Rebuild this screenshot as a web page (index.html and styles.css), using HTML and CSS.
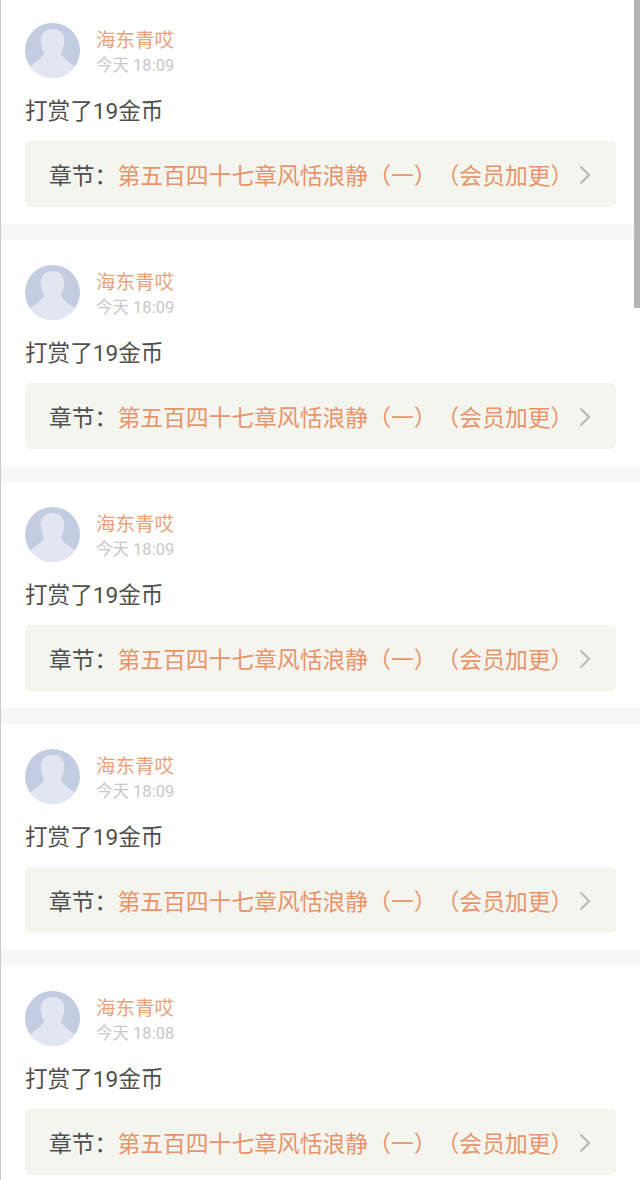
FILE: index.html
```html
<!DOCTYPE html>
<html lang="zh-CN">
<head>
  <meta charset="UTF-8">
  <title>打赏记录</title>
  <link rel="stylesheet" href="styles.css">
</head>
<body>
  <div class="list">
    <div class="item">
      <div class="user">
        <svg class="avatar" viewBox="0 0 56 56"><circle cx="28" cy="28" r="28" fill="#c3cce1"/><path d="M28 6C35 6 40 10 40 18C40 23 38 28 36.500 31C39 36 45 40 51 44A28 28 0 0 1 5 44C11 40 17 36 19.500 31C18 28 16 23 16 18C16 10 21 6 28 6Z" fill="#e2e6f1"/></svg>
        <div class="meta">
          <div class="name">海东青哎</div>
          <div class="time">今天 18:09</div>
        </div>
      </div>
      <div class="content">打赏了19金币</div>
      <div class="chapter">
        <span class="label">章节：</span><span class="title">第五百四十七章风恬浪静（一）（会员加更）</span>
        <svg class="arrow" viewBox="0 0 12 20"><path d="M1.500 1.500 10 10l-8.500 8.500" fill="none" stroke="#bdbdb8" stroke-width="2.400"/></svg>
      </div>
    </div>
    <div class="item">
      <div class="user">
        <svg class="avatar" viewBox="0 0 56 56"><circle cx="28" cy="28" r="28" fill="#c3cce1"/><path d="M28 6C35 6 40 10 40 18C40 23 38 28 36.500 31C39 36 45 40 51 44A28 28 0 0 1 5 44C11 40 17 36 19.500 31C18 28 16 23 16 18C16 10 21 6 28 6Z" fill="#e2e6f1"/></svg>
        <div class="meta">
          <div class="name">海东青哎</div>
          <div class="time">今天 18:09</div>
        </div>
      </div>
      <div class="content">打赏了19金币</div>
      <div class="chapter">
        <span class="label">章节：</span><span class="title">第五百四十七章风恬浪静（一）（会员加更）</span>
        <svg class="arrow" viewBox="0 0 12 20"><path d="M1.500 1.500 10 10l-8.500 8.500" fill="none" stroke="#bdbdb8" stroke-width="2.400"/></svg>
      </div>
    </div>
    <div class="item">
      <div class="user">
        <svg class="avatar" viewBox="0 0 56 56"><circle cx="28" cy="28" r="28" fill="#c3cce1"/><path d="M28 6C35 6 40 10 40 18C40 23 38 28 36.500 31C39 36 45 40 51 44A28 28 0 0 1 5 44C11 40 17 36 19.500 31C18 28 16 23 16 18C16 10 21 6 28 6Z" fill="#e2e6f1"/></svg>
        <div class="meta">
          <div class="name">海东青哎</div>
          <div class="time">今天 18:09</div>
        </div>
      </div>
      <div class="content">打赏了19金币</div>
      <div class="chapter">
        <span class="label">章节：</span><span class="title">第五百四十七章风恬浪静（一）（会员加更）</span>
        <svg class="arrow" viewBox="0 0 12 20"><path d="M1.500 1.500 10 10l-8.500 8.500" fill="none" stroke="#bdbdb8" stroke-width="2.400"/></svg>
      </div>
    </div>
    <div class="item">
      <div class="user">
        <svg class="avatar" viewBox="0 0 56 56"><circle cx="28" cy="28" r="28" fill="#c3cce1"/><path d="M28 6C35 6 40 10 40 18C40 23 38 28 36.500 31C39 36 45 40 51 44A28 28 0 0 1 5 44C11 40 17 36 19.500 31C18 28 16 23 16 18C16 10 21 6 28 6Z" fill="#e2e6f1"/></svg>
        <div class="meta">
          <div class="name">海东青哎</div>
          <div class="time">今天 18:09</div>
        </div>
      </div>
      <div class="content">打赏了19金币</div>
      <div class="chapter">
        <span class="label">章节：</span><span class="title">第五百四十七章风恬浪静（一）（会员加更）</span>
        <svg class="arrow" viewBox="0 0 12 20"><path d="M1.500 1.500 10 10l-8.500 8.500" fill="none" stroke="#bdbdb8" stroke-width="2.400"/></svg>
      </div>
    </div>
    <div class="item">
      <div class="user">
        <svg class="avatar" viewBox="0 0 56 56"><circle cx="28" cy="28" r="28" fill="#c3cce1"/><path d="M28 6C35 6 40 10 40 18C40 23 38 28 36.500 31C39 36 45 40 51 44A28 28 0 0 1 5 44C11 40 17 36 19.500 31C18 28 16 23 16 18C16 10 21 6 28 6Z" fill="#e2e6f1"/></svg>
        <div class="meta">
          <div class="name">海东青哎</div>
          <div class="time">今天 18:08</div>
        </div>
      </div>
      <div class="content">打赏了19金币</div>
      <div class="chapter">
        <span class="label">章节：</span><span class="title">第五百四十七章风恬浪静（一）（会员加更）</span>
        <svg class="arrow" viewBox="0 0 12 20"><path d="M1.500 1.500 10 10l-8.500 8.500" fill="none" stroke="#bdbdb8" stroke-width="2.400"/></svg>
      </div>
    </div>
  </div>
  <div class="scrollbar"></div>
</body>
</html>
```

FILE: styles.css
```css
html, body {
  height: 100%;
  overflow: hidden;
}

body {
  margin: 0;
  background-color: #fff;
  font-family: Roboto, "Noto Sans CJK SC", sans-serif;
  color: #4f4f4f;
  border-left: 1px solid #c9c9c9;
  box-sizing: border-box;
  text-spacing-trim: space-all;
}

.list {
  margin-top: -2px;
}

.item {
  height: 226px;
  box-sizing: border-box;
  padding: 25px 24px 0 24px;
  margin-bottom: 16px;
  position: relative;
}

.item::after {
  content: "";
  position: absolute;
  left: 0;
  right: 0;
  bottom: -16px;
  height: 16px;
  background-color: #f8f7f7;
}

.user {
  display: flex;
  align-items: center;
  height: 55px;
}

.avatar {
  width: 55px;
  height: 55px;
  flex-shrink: 0;
}

.meta {
  margin-left: 16px;
  padding-top: 2px;
}

.name {
  font-size: 19.500px;
  line-height: 26px;
  margin-top: 2px;
  color: #e9a27c;
}

.time {
  font-size: 16.500px;
  line-height: 22px;
  margin-top: 1px;
  color: #c9c9c9;
}

.content {
  font-size: 22.600px;
  line-height: 28px;
  margin-top: 20px;
}

.chapter {
  display: flex;
  align-items: center;
  height: 66px;
  margin-top: 15px;
  padding-left: 24px;
  background-color: #f5f5ef;
  border-radius: 5px;
  font-size: 22.800px;
  white-space: nowrap;
}

.title {
  color: #e8946a;
}

.arrow {
  width: 12px;
  height: 20px;
  margin: 2px 0 0 6px;
}

.scrollbar {
  position: fixed;
  top: 0;
  right: 0;
  width: 6px;
  height: 308px;
  background-color: #b5b5b5;
}
```
